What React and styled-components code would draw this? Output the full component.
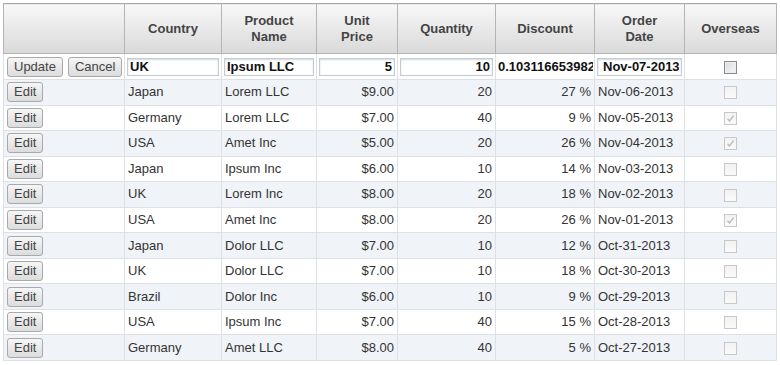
import React from "react";
import styled, { createGlobalStyle } from "styled-components";

const GlobalStyle = createGlobalStyle`
  body {
    margin: 0;
    background: #fff;
    font-family: "Liberation Sans", Arial, sans-serif;
  }
`;

const rows = [
  ["Japan", "Lorem LLC", "$9.00", 20, "27 %", "Nov-06-2013", false],
  ["Germany", "Lorem LLC", "$7.00", 40, "9 %", "Nov-05-2013", true],
  ["USA", "Amet Inc", "$5.00", 20, "26 %", "Nov-04-2013", true],
  ["Japan", "Ipsum Inc", "$6.00", 10, "14 %", "Nov-03-2013", false],
  ["UK", "Lorem Inc", "$8.00", 20, "18 %", "Nov-02-2013", false],
  ["USA", "Amet Inc", "$8.00", 20, "26 %", "Nov-01-2013", true],
  ["Japan", "Dolor LLC", "$7.00", 10, "12 %", "Oct-31-2013", false],
  ["UK", "Dolor LLC", "$7.00", 10, "18 %", "Oct-30-2013", false],
  ["Brazil", "Dolor Inc", "$6.00", 10, "9 %", "Oct-29-2013", false],
  ["USA", "Ipsum Inc", "$7.00", 40, "15 %", "Oct-28-2013", false],
  ["Germany", "Amet LLC", "$8.00", 40, "5 %", "Oct-27-2013", false],
];

const cols = [121, 97, 95, 81, 98, 99, 90, 92];

const Checkbox = ({ checked, disabled }) => (
  <Box disabled={disabled}>
    {checked && (
      <svg width="11" height="11" viewBox="0 0 11 11">
        <path d="M2.5 5.8 L4.5 8 L8.6 2.6" fill="none" stroke={disabled ? "#bbb" : "#333"} strokeWidth="1.4" />
      </svg>
    )}
  </Box>
);

const App = () => {
  return (
    <Page>
      <GlobalStyle />
      <Grid>
        <colgroup>
          {cols.map((w, i) => (
            <col key={i} style={{ width: w }} />
          ))}
        </colgroup>
        <thead>
          <tr>
            <Th></Th>
            <Th>Country</Th>
            <Th>Product<br />Name</Th>
            <Th>Unit<br />Price</Th>
            <Th>Quantity</Th>
            <Th>Discount</Th>
            <Th>Order<br />Date</Th>
            <Th>Overseas</Th>
          </tr>
        </thead>
        <tbody>
          <EditRow>
            <Td>
              <Btn>Update</Btn>
              <Btn $gap>Cancel</Btn>
            </Td>
            <Td $in><Field defaultValue="UK" /></Td>
            <Td $in><Field defaultValue="Ipsum LLC" /></Td>
            <Td $in><Field $right defaultValue="5" /></Td>
            <Td $in><Field $right defaultValue="10" /></Td>
            <Td $tight><Field $right $bare defaultValue="0.103116653982" /></Td>
            <Td $in><Field $center defaultValue="Nov-07-2013" /></Td>
            <Td $center><Checkbox /></Td>
          </EditRow>
          {rows.map((r, i) => (
            <Row key={i} $alt={i % 2 === 0}>
              <Td><Btn>Edit</Btn></Td>
              <Td>{r[0]}</Td>
              <Td>{r[1]}</Td>
              <Td $right>{r[2]}</Td>
              <Td $right>{r[3]}</Td>
              <Td $right>{r[4]}</Td>
              <Td>{r[5]}</Td>
              <Td $center><Checkbox checked={r[6]} disabled /></Td>
            </Row>
          ))}
        </tbody>
      </Grid>
    </Page>
  );
};

const Page = styled.div`
  padding: 3px 0 0 3px;
`;

const Grid = styled.table`
  width: 774px;
  table-layout: fixed;
  border-collapse: collapse;
  border: 1px solid #a8a8a8;
  font-size: 13px;
  color: #333;
`;

const Th = styled.th`
  height: 49px;
  padding: 0 3px;
  background: linear-gradient(#f8f8f8, #d9d9d9);
  border: 1px solid #b4b4b4;
  border-top: 0;
  color: #444;
  font-weight: bold;
  font-size: 13px;
  line-height: 16px;
  text-align: center;
  vertical-align: middle;
`;

const Row = styled.tr`
  height: 25.55px;
  background: ${(p) => (p.$alt ? "#f0f3f8" : "#fff")};
`;

const EditRow = styled.tr`
  height: 26px;
  background: #fff;
`;

const Td = styled.td`
  padding: ${(p) => (p.$tight ? "0 0 0 1px" : p.$in ? "0 2px" : "0 3px")};
  border: 1px solid #dde0e4;
  border-top-color: #e2e4e8;
  text-align: ${(p) => (p.$right ? "right" : p.$center ? "center" : "left")};
  vertical-align: middle;
  white-space: nowrap;
  overflow: hidden;
  line-height: 16px;
`;

const Btn = styled.button`
  height: 20px;
  margin-left: ${(p) => (p.$gap ? "5px" : "0")};
  padding: 0 6px;
  border: 1px solid #a9a9a9;
  border-radius: 3px;
  background: linear-gradient(#f6f6f6, #dcdcdc);
  color: #444;
  font-family: "Liberation Sans", Arial, sans-serif;
  font-size: 13px;
  line-height: 16px;
  vertical-align: middle;
`;

const Field = styled.input`
  box-sizing: border-box;
  width: 100%;
  height: 18px;
  margin: 0;
  padding: 0 2px;
  border: ${(p) => (p.$bare ? "1px solid transparent" : "1px solid #c4ccd6")};
  box-shadow: ${(p) => (p.$bare ? "none" : "inset 0 1px 2px rgba(120, 140, 170, 0.35)")};
  background: #fff;
  color: #111;
  font-family: "Liberation Sans", Arial, sans-serif;
  font-size: 13px;
  font-weight: bold;
  text-align: ${(p) => (p.$right ? "right" : "left")};
  padding-left: ${(p) => (p.$center ? "5px" : p.$bare ? "0" : "2px")};
  padding-right: ${(p) => (p.$bare ? "0" : "2px")};
  outline: none;
`;

const Box = styled.span`
  display: inline-flex;
  align-items: center;
  justify-content: center;
  box-sizing: border-box;
  width: 13px;
  height: 13px;
  vertical-align: middle;
  border: 1px solid ${(p) => (p.disabled ? "#c8c8c8" : "#8a8a8a")};
  background: ${(p) =>
    p.disabled ? "linear-gradient(#f2f2f2, #fafafa)" : "linear-gradient(135deg, #d6dbe3, #f7f7f7)"};
  box-shadow: ${(p) => (p.disabled ? "none" : "inset 0 0 0 1px #eeeeee")};
`;

export default App;
